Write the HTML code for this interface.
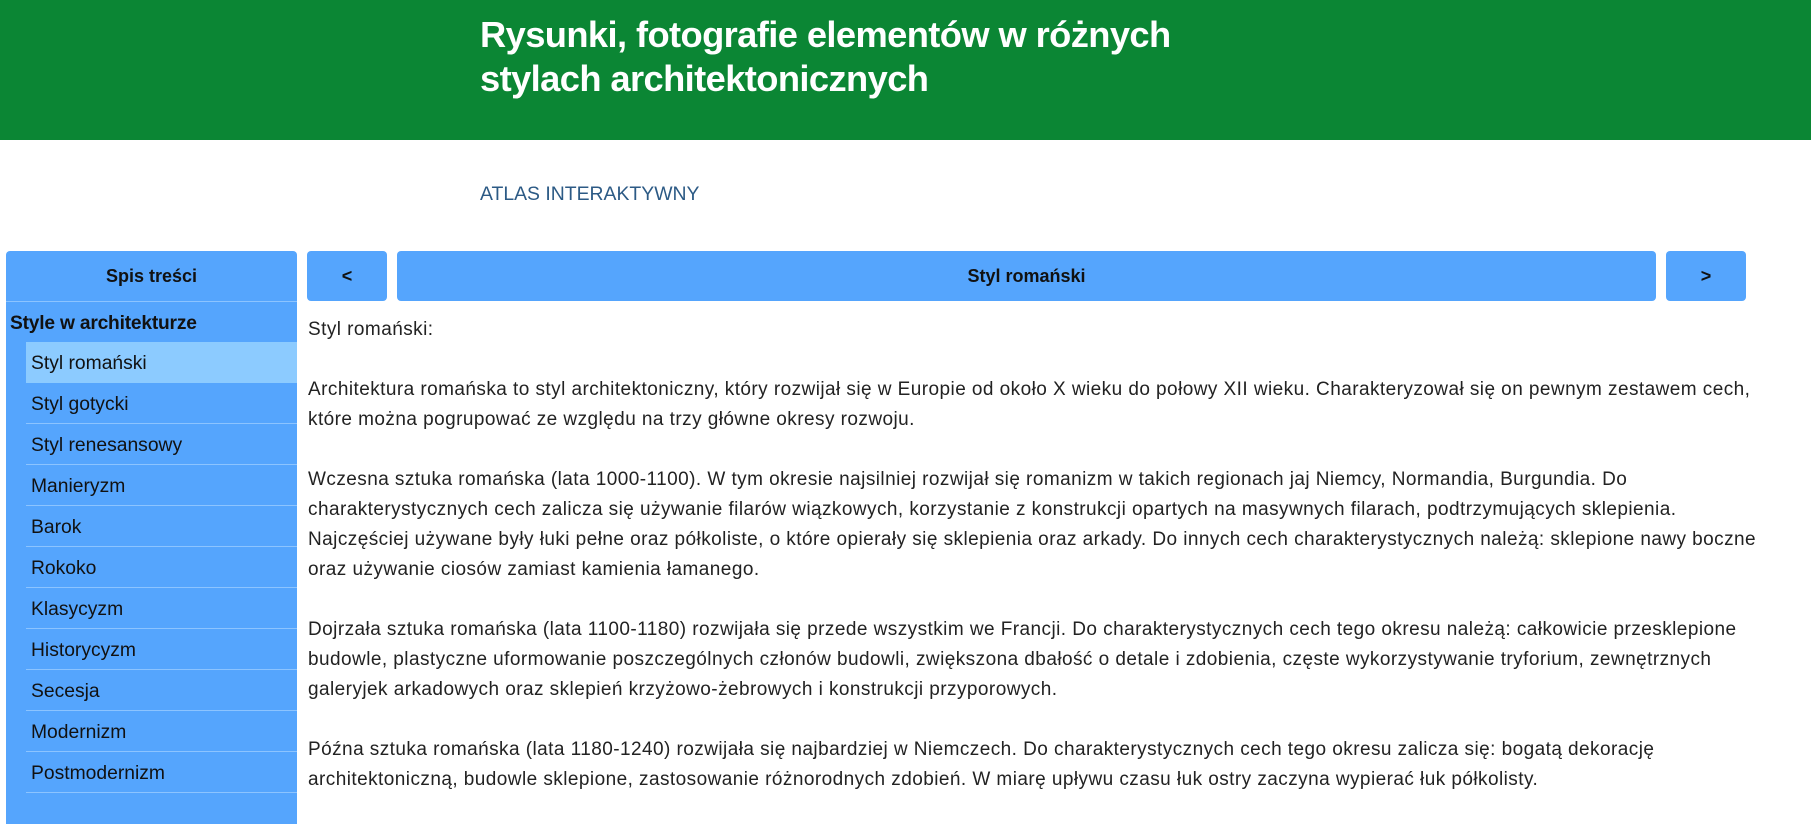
<!DOCTYPE html>
<html><head><meta charset="utf-8"><style>
*{margin:0;padding:0;box-sizing:border-box}
body{width:1811px;height:824px;overflow:hidden;background:#fff;font-family:"Liberation Sans",sans-serif;color:#222;position:relative}
.hdr{position:absolute;left:0;top:0;width:1811px;height:140px;background:#0b8634}
.hdr h1{position:absolute;left:480px;top:13px;color:#fff;font-size:36.3px;line-height:44px;font-weight:bold;letter-spacing:-0.6px}
.atlas{position:absolute;left:480px;top:183px;font-size:19.4px;color:#2c5a85}
.side{position:absolute;left:6px;top:251px;width:291px;height:573px;background:#55a5fd;border-radius:4px 4px 0 0}
.side .t{height:51px;line-height:51px;text-align:center;font-weight:bold;font-size:18px;color:#111;border-bottom:1px solid #8cc4ff}
.side .s{height:40px;line-height:43px;padding-left:4px;font-weight:bold;font-size:19.2px;color:#111;letter-spacing:-0.2px}
.side .i{margin-left:20px;height:41px;line-height:43px;padding-left:5px;font-size:19.3px;color:#111;border-bottom:1px solid #8cc4ff}
.side .i.a{background:#8ccbff;border-bottom-color:#8ccbff}
.btn{position:absolute;top:251px;height:50px;background:#55a5fd;border-radius:4px;text-align:center;line-height:50px;font-weight:bold;font-size:18px;color:#111}
.txt{position:absolute;left:308px;top:315px;font-size:19px;letter-spacing:0.44px;line-height:30px;white-space:pre;color:#222}
</style></head><body>
<div class="hdr"><h1>Rysunki, fotografie elementów w różnych<br>stylach architektonicznych</h1></div>
<div class="atlas">ATLAS INTERAKTYWNY</div>
<div class="side">
<div class="t">Spis treści</div>
<div class="s">Style w architekturze</div>
<div class="i a">Styl romański</div>
<div class="i">Styl gotycki</div>
<div class="i">Styl renesansowy</div>
<div class="i">Manieryzm</div>
<div class="i">Barok</div>
<div class="i">Rokoko</div>
<div class="i">Klasycyzm</div>
<div class="i">Historycyzm</div>
<div class="i">Secesja</div>
<div class="i">Modernizm</div>
<div class="i">Postmodernizm</div>
</div>
<div class="btn" style="left:307px;width:80px">&lt;</div>
<div class="btn" style="left:397px;width:1259px">Styl romański</div>
<div class="btn" style="left:1666px;width:80px">&gt;</div>
<div class="txt">Styl romański:

Architektura romańska to styl architektoniczny, który rozwijał się w Europie od około X wieku do połowy XII wieku. Charakteryzował się on pewnym zestawem cech,
które można pogrupować ze względu na trzy główne okresy rozwoju.

Wczesna sztuka romańska (lata 1000-1100). W tym okresie najsilniej rozwijał się romanizm w takich regionach jaj Niemcy, Normandia, Burgundia. Do
charakterystycznych cech zalicza się używanie filarów wiązkowych, korzystanie z konstrukcji opartych na masywnych filarach, podtrzymujących sklepienia.
Najczęściej używane były łuki pełne oraz półkoliste, o które opierały się sklepienia oraz arkady. Do innych cech charakterystycznych należą: sklepione nawy boczne
oraz używanie ciosów zamiast kamienia łamanego.

Dojrzała sztuka romańska (lata 1100-1180) rozwijała się przede wszystkim we Francji. Do charakterystycznych cech tego okresu należą: całkowicie przesklepione
budowle, plastyczne uformowanie poszczególnych członów budowli, zwiększona dbałość o detale i zdobienia, częste wykorzystywanie tryforium, zewnętrznych
galeryjek arkadowych oraz sklepień krzyżowo-żebrowych i konstrukcji przyporowych.

Późna sztuka romańska (lata 1180-1240) rozwijała się najbardziej w Niemczech. Do charakterystycznych cech tego okresu zalicza się: bogatą dekorację
architektoniczną, budowle sklepione, zastosowanie różnorodnych zdobień. W miarę upływu czasu łuk ostry zaczyna wypierać łuk półkolisty.</div>
</body></html>
